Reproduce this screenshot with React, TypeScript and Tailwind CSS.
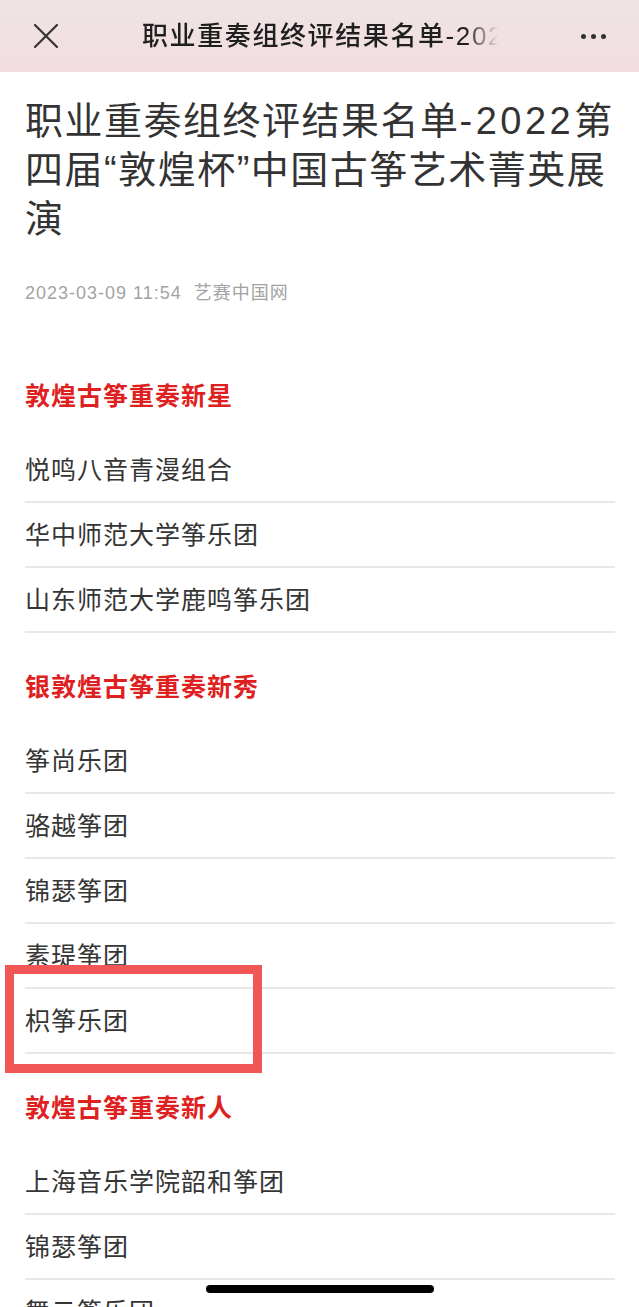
import React from 'react';

const sections = [
  {
    title: '敦煌古筝重奏新星',
    items: ['悦鸣八音青漫组合', '华中师范大学筝乐团', '山东师范大学鹿鸣筝乐团'],
  },
  {
    title: '银敦煌古筝重奏新秀',
    items: ['筝尚乐团', '骆越筝团', '锦瑟筝团', '素瑅筝团', '枳筝乐团'],
  },
  {
    title: '敦煌古筝重奏新人',
    items: ['上海音乐学院韶和筝团', '锦瑟筝团', '舞云筝乐团'],
  },
];

function CloseIcon() {
  return (
    <svg width="26" height="26" viewBox="0 0 26 26" fill="none">
      <path d="M2 2 L24 24 M24 2 L2 24" stroke="#333" strokeWidth="2.2" strokeLinecap="round" />
    </svg>
  );
}

export default function App() {
  return (
    <div className="relative h-[1307px] overflow-hidden bg-white font-['Liberation_Sans','Noto_Sans_CJK_SC',sans-serif]">
      {/* top bar */}
      <div className="flex h-[72px] items-center bg-gradient-to-b from-[#eee4e5] to-[#f3dde0]">
        <div className="flex w-[91px] justify-center">
          <CloseIcon />
        </div>
        <div className="ml-[51px] w-[356px] overflow-hidden whitespace-nowrap text-[26px] font-medium leading-[32px] tracking-[1.6px] text-[#1f1f1f] [mask-image:linear-gradient(to_right,black_91%,transparent)]">
          职业重奏组终评结果名单-2022第四届“敦煌杯”中国古筝艺术菁英展演
        </div>
        <div className="ml-auto flex w-[92px] items-center justify-center gap-[5px]">
          <span className="h-[5px] w-[5px] rounded-full bg-[#333]" />
          <span className="h-[5px] w-[5px] rounded-full bg-[#333]" />
          <span className="h-[5px] w-[5px] rounded-full bg-[#333]" />
        </div>
      </div>

      <div className="pl-[25px] pr-[24px]">
        <h1 className="mt-[25px] text-[38px] font-normal leading-[49px] tracking-[1.5px] text-[#333]">
          职业重奏组终评结果名单<span className="tracking-[3.5px]">-2022</span>第四届“敦煌杯”中国古筝艺术菁英展演
        </h1>

        <div className="mt-[37px] flex text-[18px] leading-[24px] text-[#a3a3a3]">
          <span className="tracking-[1px]">2023-03-09 11:54</span>
          <span className="ml-[12px] tracking-[1px]">艺赛中国网</span>
        </div>

        <div className="mt-[75px]">
          {sections.map((s, i) => (
            <section key={s.title} className={i === 0 ? '' : 'mt-[38px]'}>
              <h2 className="mb-[26px] text-[25px] font-bold leading-[32px] tracking-[1px] text-[#df2020]">
                {s.title}
              </h2>
              {s.items.map((it, j) => (
                <div
                  key={j}
                  className="flex h-[65px] items-center border-b-2 border-[#e8e8e8] text-[25px] leading-[32px] tracking-[1px] text-[#353535]"
                >
                  {it}
                </div>
              ))}
            </section>
          ))}
        </div>
      </div>

      {/* annotation box */}
      <div className="absolute left-[5px] top-[965px] h-[108px] w-[257px] border-[9px] border-[#f15757]" />

      {/* home indicator */}
      <div className="absolute bottom-[14px] left-[206px] h-[8px] w-[228px] rounded-full bg-black" />
    </div>
  );
}
